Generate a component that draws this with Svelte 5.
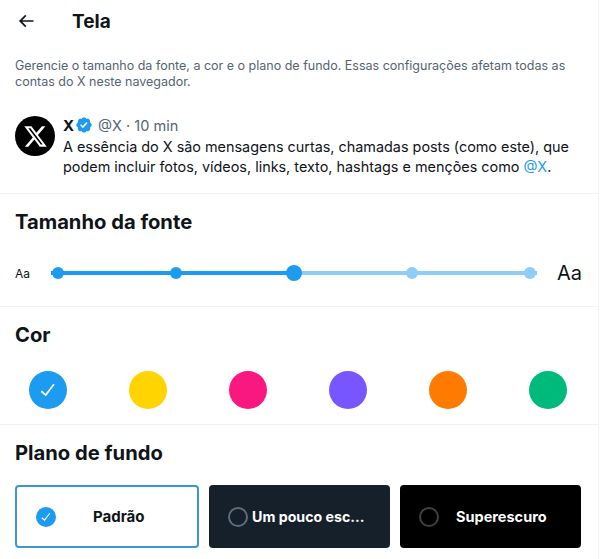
<script>
  const dots = [
    { on: true },
    { on: true },
    { on: true, current: true },
    { on: false },
    { on: false }
  ];
  const colors = ['#1d9bf0', '#ffd400', '#f91880', '#7856ff', '#ff7a00', '#00ba7c'];
  const check = 'M9.64 18.952l-5.55-4.861 1.317-1.504 3.951 3.459 8.459-10.948L19.2 6.21 9.64 18.952z';
</script>

<div class="page">
  <main class="panel">
    <header class="top">
      <svg class="back" viewBox="0 0 24 24"><path d="M7.414 13l5.043 5.04-1.414 1.42L3.586 12l7.457-7.46 1.414 1.42L7.414 11H21v2H7.414z" /></svg>
      <h1>Tela</h1>
    </header>

    <p class="intro">Gerencie o tamanho da fonte, a cor e o plano de fundo. Essas configurações afetam todas as contas do X neste navegador.</p>

    <article class="post">
      <div class="avatar">
        <svg viewBox="0 0 24 24"><path d="M18.244 2.25h3.308l-7.227 8.26 8.502 11.24H16.17l-5.214-6.817L4.99 21.75H1.68l7.73-8.835L1.254 2.25H8.08l4.713 6.231zm-1.161 17.52h1.833L7.084 4.126H5.117z" /></svg>
      </div>
      <div class="body">
        <div class="meta">
          <strong>X</strong>
          <svg class="badge" viewBox="0 0 22 22"><path d="M20.396 11c-.018-.646-.215-1.275-.57-1.816-.354-.54-.852-.972-1.438-1.246.223-.607.27-1.264.14-1.897-.131-.634-.437-1.218-.882-1.687-.47-.445-1.053-.75-1.687-.882-.633-.13-1.29-.083-1.897.14-.273-.587-.704-1.086-1.245-1.44S11.647 1.62 11 1.604c-.646.017-1.273.213-1.813.568s-.969.854-1.24 1.44c-.608-.223-1.267-.272-1.902-.14-.635.13-1.22.436-1.69.882-.445.47-.749 1.055-.878 1.688-.13.633-.08 1.29.144 1.896-.587.274-1.087.705-1.443 1.245-.356.54-.555 1.17-.574 1.817.02.647.218 1.276.574 1.817.356.54.856.972 1.443 1.245-.224.606-.274 1.263-.144 1.896.13.634.433 1.218.877 1.688.47.443 1.054.747 1.687.878.633.132 1.29.084 1.897-.136.274.586.705 1.084 1.246 1.439.54.354 1.17.551 1.816.569.647-.016 1.276-.213 1.817-.567s.972-.854 1.245-1.44c.604.239 1.266.296 1.903.164.636-.132 1.22-.447 1.68-.907.46-.46.776-1.044.908-1.681s.075-1.299-.165-1.903c.586-.274 1.084-.705 1.439-1.246.354-.54.551-1.17.569-1.816zM9.662 14.85l-3.429-3.428 1.293-1.302 2.072 2.072 4.4-4.794 1.347 1.246z" /></svg>
          <span class="handle">@X · 10 min</span>
        </div>
        <p class="text">A essência do X são mensagens curtas, chamadas posts (como este), que podem incluir fotos, vídeos, links, texto, hashtags e menções como <span class="link">@X</span>.</p>
      </div>
    </article>

    <section class="font">
      <h2>Tamanho da fonte</h2>
      <div class="slider-row">
        <span class="small">Aa</span>
        <div class="track">
          {#each dots as d}
            <span class="dot" class:on={d.on} class:current={d.current}></span>
          {/each}
        </div>
        <span class="large">Aa</span>
      </div>
    </section>

    <section class="colors">
      <h2>Cor</h2>
      <div class="swatches">
        {#each colors as c, i}
          <div class="swatch" style="background:{c}">
            {#if i === 0}
              <svg viewBox="0 0 24 24"><path d={check} /></svg>
            {/if}
          </div>
        {/each}
      </div>
    </section>

    <section class="bg">
      <h2>Plano de fundo</h2>
      <div class="cards">
        <div class="card light">
          <span class="radio checked"><svg viewBox="0 0 24 24"><path d={check} /></svg></span>
          <span class="label">Padrão</span>
        </div>
        <div class="card dim">
          <span class="radio"></span>
          <span class="label">Um pouco esc...</span>
        </div>
        <div class="card black">
          <span class="radio"></span>
          <span class="label">Superescuro</span>
        </div>
      </div>
    </section>
  </main>
</div>

<style>
  :global(body) {
    margin: 0;
    background: #fff;
    overflow: hidden;
  }
  .page {
    width: 615px;
    height: 559px;
    overflow: hidden;
    font-family: Inter, "Noto Sans", "Liberation Sans", sans-serif;
    color: #0f1419;
  }
  .panel {
    width: 598px;
    height: 559px;
    border-right: 1px solid #eff3f4;
  }
  h1, h2, p {
    margin: 0;
  }
  .top {
    height: 42px;
    display: flex;
    align-items: center;
    padding-left: 16px;
  }
  .back {
    width: 20px;
    height: 20px;
    fill: #0f1419;
  }
  h1 {
    margin-left: 36px;
    padding-top: 1px;
    font-size: 19px;
    line-height: 24px;
    font-weight: 700;
  }
  .intro {
    margin-top: 16px;
    padding: 0 30px 0 15px;
    font-size: 12.5px;
    line-height: 16px;
    color: #536471;
  }
  .post {
    display: flex;
    gap: 8px;
    padding: 16px 15px 0;
    height: 77px;
    margin-top: 10px;
    border-bottom: 1px solid #eff3f4;
  }
  .avatar {
    width: 40px;
    height: 40px;
    border-radius: 50%;
    background: #000;
    display: flex;
    align-items: center;
    justify-content: center;
    flex: none;
  }
  .avatar svg {
    width: 25px;
    height: 25px;
    fill: #fff;
  }
  .body {
    flex: 1;
    min-width: 0;
    margin-top: -1px;
  }
  .meta {
    display: flex;
    align-items: center;
    height: 20px;
    margin-bottom: 2px;
    font-size: 15px;
  }
  .meta strong {
    font-weight: 700;
  }
  .badge {
    width: 18px;
    height: 18px;
    fill: #1d9bf0;
    margin-left: 1px;
  }
  .handle {
    color: #536471;
    margin-left: 5px;
    font-size: 14.5px;
  }
  .text {
    font-size: 14.4px;
    line-height: 20px;
  }
  .link {
    color: #1d9bf0;
  }
  h2 {
    font-size: 20.2px;
    line-height: 24px;
    font-weight: 700;
  }
  section {
    padding: 16px 15px 0;
    border-bottom: 1px solid #eff3f4;
    box-sizing: border-box;
  }
  .font {
    height: 113px;
  }
  .slider-row {
    margin-top: 27px;
    display: flex;
    align-items: center;
    height: 24px;
  }
  .small {
    width: 36px;
    font-size: 12px;
    flex: none;
  }
  .large {
    margin-left: 20px;
    font-size: 20px;
    flex: none;
  }
  .track {
    width: 484px;
    padding: 0 1px;
    height: 4px;
    flex: none;
    display: flex;
    align-items: center;
    justify-content: space-between;
    background: linear-gradient(to right, #1d9bf0 50%, #8ecdf8 50%);
  }
  .dot {
    width: 12px;
    height: 12px;
    border-radius: 50%;
    background: #8ecdf8;
  }
  .dot.on {
    background: #1d9bf0;
  }
  .dot.current {
    width: 16px;
    height: 16px;
    margin: 0 -2px;
  }
  .colors {
    height: 118px;
  }
  .swatches {
    margin-top: 24px;
    display: flex;
    justify-content: space-between;
    padding: 0 16px 0 14px;
  }
  .swatch {
    width: 38px;
    height: 38px;
    border-radius: 50%;
    display: flex;
    align-items: center;
    justify-content: center;
  }
  .swatch svg {
    width: 22px;
    height: 22px;
    fill: #fff;
  }
  .bg {
    border-bottom: none;
  }
  .cards {
    margin-top: 20px;
    display: flex;
    gap: 10px;
  }
  .card {
    flex: 0 0 181px;
    min-width: 0;
    height: 63px;
    box-sizing: border-box;
    border-radius: 4px;
    display: flex;
    align-items: center;
    padding-left: 19px;
    font-size: 14.5px;
    font-weight: 700;
    white-space: nowrap;
  }
  .light {
    flex-basis: 184px;
    background: #fff;
    border: 2px solid #3b97d3;
    color: #0f1419;
    font-size: 15px;
  }
  .dim {
    background: #15202b;
    color: #fff;
    font-size: 14.2px;
  }
  .black {
    background: #000;
    color: #fff;
  }
  .radio {
    width: 20px;
    height: 20px;
    box-sizing: border-box;
    border-radius: 50%;
    border: 2px solid #5c6e7e;
    flex: none;
    display: flex;
    align-items: center;
    justify-content: center;
  }
  .black .radio {
    border-color: #3e4144;
  }
  .radio.checked {
    border: none;
    background: #1d9bf0;
  }
  .radio svg {
    width: 14px;
    height: 14px;
    fill: #fff;
  }
  .label {
    flex: none;
  }
  .light .label {
    margin-left: 37px;
  }
  .dim .label {
    margin-left: 4px;
  }
  .black .label {
    margin-left: 17px;
  }
</style>
